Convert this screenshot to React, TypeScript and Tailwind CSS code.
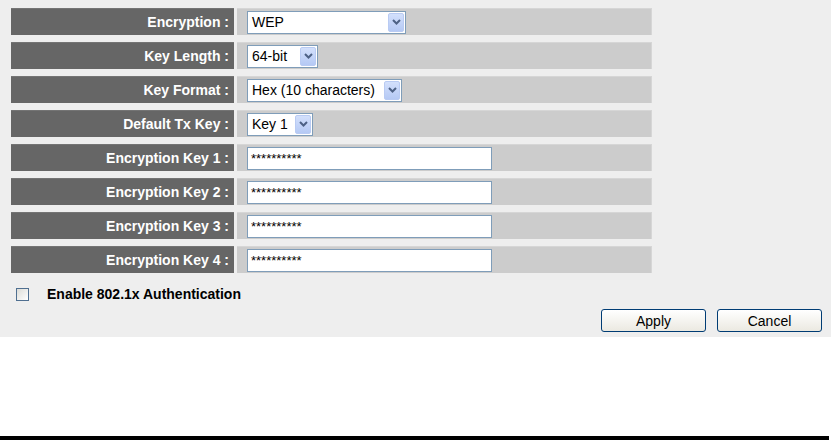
import React from "react";

const font = { fontFamily: '"Liberation Sans", Arial, sans-serif' };

const Chevron = () => (
  <svg width="9" height="6" viewBox="0 0 9 6">
    <path d="M1 1 L4.5 4.5 L8 1" fill="none" stroke="#4d6185" strokeWidth="2" />
  </svg>
);

const FakeSelect = ({ value, width }: { value: string; width: number }) => (
  <div
    className="h-[23px] bg-white border border-[#7f9db9] flex items-center justify-between pl-[4px] pr-[1px]"
    style={{ width }}
  >
    <span className="text-[14px] text-black leading-none">{value}</span>
    <div className="w-[16px] h-[19px] rounded-[2px] border border-[#b9cbf3] bg-gradient-to-b from-[#d3e0fc] to-[#b5c9f4] flex items-center justify-center">
      <Chevron />
    </div>
  </div>
);

const PasswordBox = () => (
  <div className="w-[245px] h-[23px] bg-white border border-[#7f9db9] flex items-center pl-[3px]">
    <span className="text-[13px] text-black leading-none tracking-[0px]">**********</span>
  </div>
);

const rows: { label: string; control: React.ReactNode }[] = [
  { label: "Encryption :", control: <FakeSelect value="WEP" width={159} /> },
  { label: "Key Length :", control: <FakeSelect value="64-bit" width={71} /> },
  { label: "Key Format :", control: <FakeSelect value="Hex (10 characters)" width={155} /> },
  { label: "Default Tx Key :", control: <FakeSelect value="Key 1" width={66} /> },
  { label: "Encryption Key 1 :", control: <PasswordBox /> },
  { label: "Encryption Key 2 :", control: <PasswordBox /> },
  { label: "Encryption Key 3 :", control: <PasswordBox /> },
  { label: "Encryption Key 4 :", control: <PasswordBox /> },
];

const XpButton = ({ children }: { children: React.ReactNode }) => (
  <button className="w-[105px] h-[23px] rounded-[3px] border border-[#003c74] bg-gradient-to-b from-white to-[#ebe9e1] text-[14px] text-black leading-none">
    {children}
  </button>
);

export default function App() {
  return (
    <div className="w-[831px] h-[440px] bg-white flex flex-col" style={font}>
      <div className="h-[337px] bg-[#eeeeee] pt-[8px]">
        <div className="flex flex-col gap-[7px] pl-[11px]">
          {rows.map((row, i) => (
            <div key={i} className="flex gap-[3px] h-[27px]">
              <div className="w-[223px] bg-[#666666] border-t border-[#747474] flex items-center justify-end pr-[5px]">
                <span className="text-white font-bold text-[14px] leading-none">{row.label}</span>
              </div>
              <div className="w-[415px] bg-[#cccccc] border-t border-r border-[#d6d6d6] flex items-center pl-[10px]">
                {row.control}
              </div>
            </div>
          ))}
        </div>

        <div className="flex items-center h-[20px] mt-[11px] pl-[16px]">
          <div className="w-[13px] h-[13px] border border-[#4f6f90] bg-gradient-to-br from-[#dcdcd7] to-white" />
          <span className="ml-[18px] font-bold text-[14px] text-black leading-none">
            Enable 802.1x Authentication
          </span>
        </div>

        <div className="flex justify-end gap-[11px] mt-[5px] pr-[9px]">
          <XpButton>Apply</XpButton>
          <XpButton>Cancel</XpButton>
        </div>
      </div>
      <div className="flex-1" />
      <div className="h-[4px] bg-black w-[829px]" />
    </div>
  );
}
